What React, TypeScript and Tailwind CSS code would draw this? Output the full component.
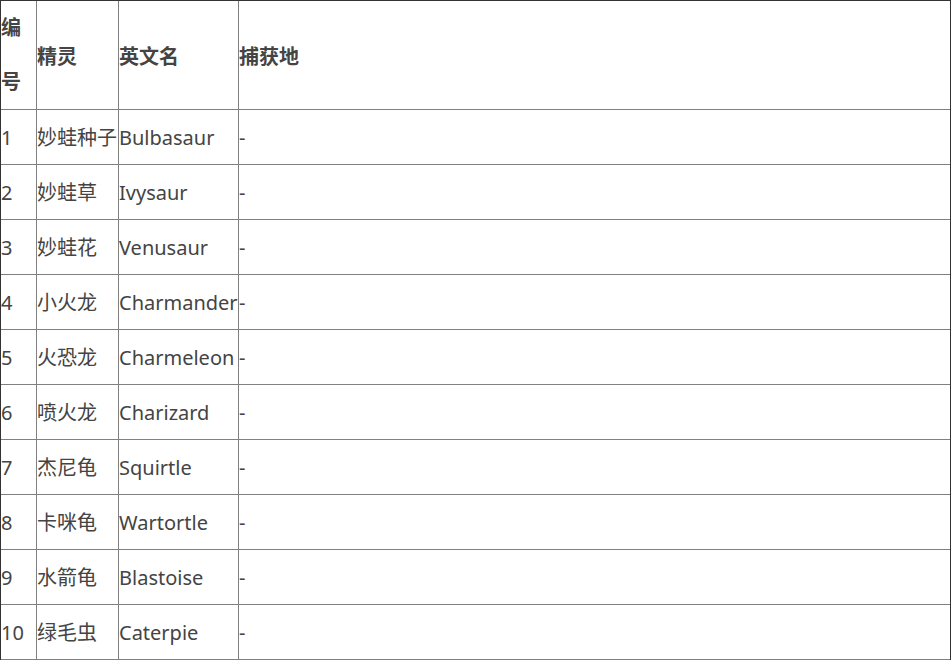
const ROWS = [
  ["1", "妙蛙种子", "Bulbasaur"],
  ["2", "妙蛙草", "Ivysaur"],
  ["3", "妙蛙花", "Venusaur"],
  ["4", "小火龙", "Charmander"],
  ["5", "火恐龙", "Charmeleon"],
  ["6", "喷火龙", "Charizard"],
  ["7", "杰尼龟", "Squirtle"],
  ["8", "卡咪龟", "Wartortle"],
  ["9", "水箭龟", "Blastoise"],
  ["10", "绿毛虫", "Caterpie"],
]

const head = "border-b border-[#808080] leading-[54px] font-bold"
const cell = "border-b border-[#808080] pt-[2px] leading-[52px] whitespace-nowrap"

export default function App() {
  return (
    <div
      className="w-[951px] border border-[#333] bg-white text-[20px] text-[#444]"
      style={{ fontFamily: '"Noto Sans", "Noto Sans CJK SC", sans-serif' }}
    >
      <div className="grid grid-cols-[36px_82px_120px_1fr]">
        {/* Header */}
        <div className={`${head} border-r`}>编号</div>
        <div className={`${head} border-r flex items-center pt-[4px]`}>精灵</div>
        <div className={`${head} border-r flex items-center pt-[4px]`}>英文名</div>
        <div className={`${head} flex items-center pt-[4px]`}>捕获地</div>

        {ROWS.map(([id, name, en]) => (
          <div key={id} className="contents">
            <div className={`${cell} border-r`}>{id}</div>
            <div className={`${cell} border-r`}>{name}</div>
            <div className={`${cell} border-r`}>{en}</div>
            <div className={cell}>-</div>
          </div>
        ))}
      </div>
    </div>
  )
}
